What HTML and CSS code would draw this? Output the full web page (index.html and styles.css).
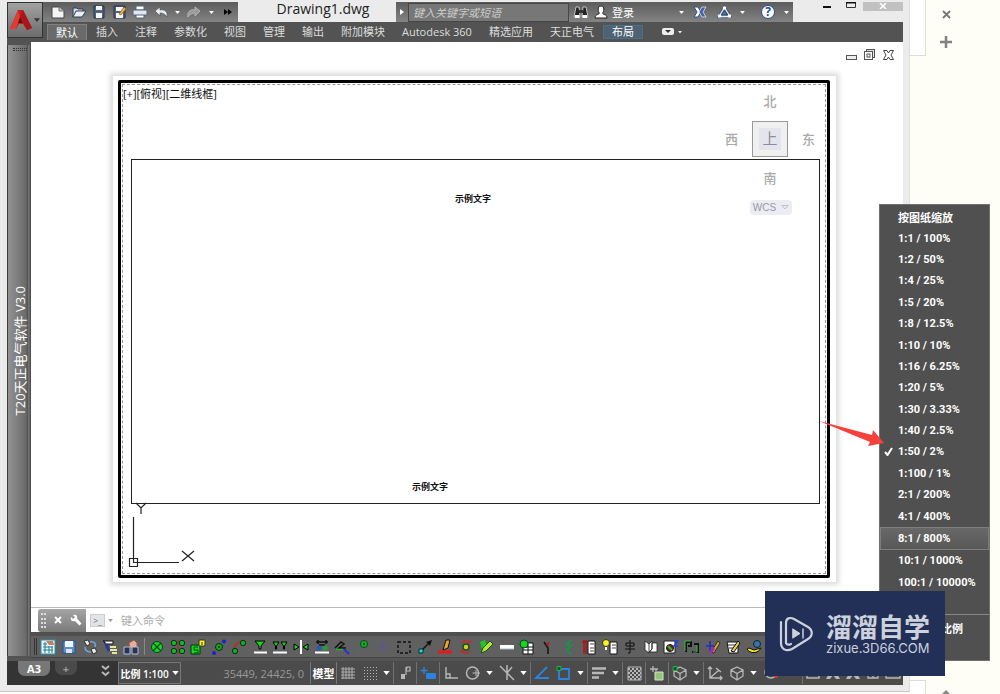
FILE: index.html
```
<!DOCTYPE html>
<html lang="zh-CN">
<head>
<meta charset="utf-8">
<title>Drawing1.dwg</title>
<link rel="stylesheet" href="styles.css">
</head>
<body>
<svg class="defs" width="0" height="0" aria-hidden="true">
  <symbol id="caret" viewBox="0 0 8 5"><path d="M0 0H8L4 5Z" fill="currentColor"/></symbol>
  <symbol id="cube" viewBox="0 0 16 16"><path d="M8 2L14 5V11L8 15L2 11V5ZM2 5L8 8.500L14 5M8 8.500V15" fill="none" stroke="currentColor" stroke-width="1.300"/></symbol>
  <symbol id="glass" viewBox="0 0 16 16"><path d="M3 2H13L9 7V10H7V7Z" fill="#1fd01f" stroke="#000"/><path d="M2 13.500H15" stroke="#fff" stroke-width="2"/></symbol>
</svg>
<div class="page">
  <main class="window">
    <header class="header">
      <button class="app-btn" aria-label="应用程序">
        <svg width="22" height="22" viewBox="0 0 22 22"><path d="M0 20L8 1H13L22 19L17 21L13 15H9L6 20Z" fill="#c3201f"/><path d="M8 1L10 8L6 20L0 20Z" fill="#e23a34"/><path d="M10 8L13 14H8Z" fill="#5a1513"/><path d="M13 1L22 19L17 21L10 8Z" fill="#a81619"/></svg>
        <svg class="c-dark" width="6" height="4"><use href="#caret"/></svg>
      </button>
      <div class="head-main">
        <div class="title-row">
          <div class="quick">
            <button aria-label="新建"><svg viewBox="0 0 16 14"><path d="M2 2H9L14 6V13H2Z" fill="#f4f4f4" stroke="#444"/><path d="M9 2V6H14" fill="#bbb" stroke="#777"/></svg></button>
            <button aria-label="打开"><svg viewBox="0 0 16 14"><path d="M2 12V3H6L7 4H12V6" fill="#cfdbe8" stroke="#2e3f55"/><path d="M2 12L5 6H15L11 12Z" fill="#e9eff5" stroke="#2e3f55"/></svg></button>
            <button aria-label="保存"><svg viewBox="0 0 16 14"><path d="M3 1H13V13H3Z" fill="#52627c" stroke="#27344c"/><path d="M5 1H11V5H5ZM5 8H11V13H5Z" fill="#f3f5f8"/></svg></button>
            <button aria-label="另存为"><svg viewBox="0 0 16 14"><path d="M2 1H13V13H2Z" fill="#52627c" stroke="#27344c"/><path d="M4 2H11V6H4ZM4 8H11V13H4Z" fill="#f3f5f8"/><path d="M7 9L12 2L14 4L9 10Z" fill="#f1b333" stroke="#7a5510" stroke-width=".6"/></svg></button>
            <button aria-label="打印"><svg viewBox="0 0 16 14"><path d="M4 1H12V5H4ZM4 9H12V13H4Z" fill="#fff" stroke="#56657a"/><path d="M1 5H15V10H1Z" fill="#dfe6ee" stroke="#56657a"/></svg></button>
            <button aria-label="放弃"><svg viewBox="0 0 16 14"><path d="M2 6L7 2V5C12 4 15 7 14 12C12 9 10 8 7 8V11Z" fill="#e8edf3" stroke="#555" stroke-width=".7"/></svg></button>
            <svg class="mini" viewBox="0 0 8 5"><use href="#caret"/></svg>
            <button aria-label="重做"><svg viewBox="0 0 16 14"><path d="M14 6L9 2V5C4 4 1 7 2 12C4 9 6 8 9 8V11Z" fill="#999" stroke="#c0c0c0" stroke-width=".8"/></svg></button>
            <svg class="mini" viewBox="0 0 8 5"><use href="#caret"/></svg>
            <button aria-label="更多"><svg viewBox="0 0 16 14"><path d="M4 4L8 7L4 10ZM8 4L12 7L8 10Z" fill="#050505"/></svg></button>
          </div>
          <h1 class="title">Drawing1.dwg</h1>
          <div class="info">
            <button class="expand" aria-label="展开"><svg width="4" height="6"><path d="M0 0L4 3L0 6Z" fill="#fff"/></svg></button>
            <input class="search" type="text" aria-label="搜索" placeholder="键入关键字或短语">
            <button class="ib" aria-label="查找"><svg width="16" height="14" viewBox="0 0 16 14"><path d="M3 2H6L7 12H1ZM10 2H13L15 12H9Z" fill="#222" stroke="#ddd" stroke-width=".8"/><path d="M6 5H10V8H6Z" fill="#333"/><path d="M2 10H6.500V13H2ZM9.500 10H14V13H9.500Z" fill="#fff"/></svg></button>
            <button class="login"><svg width="14" height="14" viewBox="0 0 14 14"><path d="M7 1C11 1 10 7 8.500 8C9 10 13 9 13 13H1C1 9 5 10 5.500 8C4 7 3 1 7 1Z" fill="#fff" stroke="#222"/></svg>登录</button>
            <i class="grow"></i>
            <svg class="mini" viewBox="0 0 8 5"><use href="#caret"/></svg>
            <button class="ib" aria-label="Exchange"><svg width="14" height="14" viewBox="0 0 14 14"><path d="M1 2H5L8 7L5 12H1L4 7Z" fill="#fff" stroke="#324f8e"/><path d="M9 2H13L10 7L13 12H9L6 7Z" fill="#4163ad" stroke="#dfe6f4" stroke-width=".8"/></svg></button>
            <button class="ib" aria-label="A360"><svg width="15" height="14" viewBox="0 0 15 14"><path d="M7.500 3L12.500 11H2.500Z" fill="none" stroke="#34507f" stroke-width="3.500"/><path d="M7.500 2.500L13 11.500H2Z" fill="none" stroke="#e8edf5" stroke-width="1.300"/><circle cx="7.500" cy="3" r="1.800" fill="#fff"/><circle cx="2.500" cy="11" r="1.800" fill="#fff"/><circle cx="12.500" cy="11" r="1.800" fill="#fff"/></svg></button>
            <svg class="mini" viewBox="0 0 8 5"><use href="#caret"/></svg>
            <button class="help" aria-label="帮助">?</button>
            <svg class="mini" viewBox="0 0 8 5"><use href="#caret"/></svg>
          </div>
          <div class="win-btns">
            <button aria-label="最小化"><svg width="8" height="6"><path d="M0 5H8" stroke="#111" stroke-width="2"/></svg></button>
            <button aria-label="最大化"><svg width="10" height="6"><path d="M.5 0V5.500H9.500V0" fill="none" stroke="#333"/><path d="M0 0H10" stroke="#111" stroke-width="3"/></svg></button>
            <button class="close" aria-label="关闭"><svg width="8" height="6" viewBox="0 0 8 6"><path d="M1 0L7 6M7 0L1 6" stroke="#fff" stroke-width="1.500"/></svg></button>
          </div>
        </div>
        <nav class="tabs">
          <button class="tab on">默认</button><button class="tab">插入</button><button class="tab">注释</button><button class="tab">参数化</button><button class="tab">视图</button><button class="tab">管理</button><button class="tab">输出</button><button class="tab">附加模块</button><button class="tab lat">Autodesk 360</button><button class="tab">精选应用</button><button class="tab">天正电气</button><button class="tab ctx">布局</button>
          <button class="tab-more" aria-label="功能区选项"><svg width="22" height="8" viewBox="0 0 22 8"><rect x="0" y="0" width="12" height="7" rx="2" fill="#eee"/><path d="M3 2H9L6 5Z" fill="#333"/><path d="M16 3H20L18 5.500Z" fill="#eee"/></svg></button>
        </nav>
      </div>
    </header>

    <div class="work">
      <aside class="palette"><span class="grip"></span><span class="pal-title">T20天正电气软件 V3.0</span></aside>
      <div class="column">
        <section class="canvas">
          <div class="doc-btns">
            <button aria-label="最小化文档"><svg width="11" height="12"><rect x=".5" y="6.500" width="10" height="4" fill="#eee" stroke="#555"/></svg></button>
            <button aria-label="还原文档"><svg width="12" height="12"><rect x="2.500" y=".5" width="8" height="8" fill="#ddd" stroke="#555"/><rect x=".5" y="2.500" width="8" height="8" fill="#fff" stroke="#555"/><rect x="3" y="5" width="3" height="3" fill="#fff" stroke="#555"/></svg></button>
            <button aria-label="关闭文档"><svg width="11" height="12" viewBox="0 0 11 12"><path d="M.5 1.500H4L5.500 4L7 1.500H10.500L8 6L10.500 10.500H7L5.500 8L4 10.500H.5L3 6Z" fill="#fff" stroke="#444"/></svg></button>
          </div>
          <div class="paper"><div class="sheet">
            <div class="print-area">
              <span class="view-label">[+][俯视][二维线框]</span>
              <div class="viewport"></div>
              <span class="sample s1">示例文字</span>
              <span class="sample s2">示例文字</span>
              <svg class="ucs" width="76" height="70" viewBox="0 0 76 70"><g fill="none" stroke="#222" stroke-width="1.200"><path d="M5.500 16V61.500H51M1.500 57.500h8v8h-8ZM8 2L13 7L18 2M13 7V13M54 50L66 60M66 50L54 60"/></g></svg>
              <div class="viewcube">
                <span class="n">北</span><span class="w">西</span><span class="top"><b>上</b></span><span class="e">东</span><span class="s">南</span>
              </div>
              <button class="wcs">WCS <svg width="8" height="5" viewBox="0 0 8 5"><path d="M.8.5H7.200L4 4Z" fill="none" stroke="#c0c0cc"/></svg></button>
            </div>
          </div></div>
        </section>
        <div class="cmd">
          <div class="cmd-tools"><i class="dots"></i>
            <button aria-label="关闭命令行"><svg width="8" height="8"><path d="M1 1L7 7M7 1L1 7" stroke="#fff" stroke-width="2"/></svg></button>
            <button aria-label="自定义"><svg width="12" height="12" viewBox="0 0 12 12"><path d="M1 3L3 5L5 3L3 1C6 0 8 2 7 4.500L11.500 9.500L9.500 11.500L5 7C2 8 0 6 1 3Z" fill="#fff"/></svg></button>
          </div>
          <span class="prompt">&gt;_</span>
          <svg class="c-gray" width="5" height="3"><use href="#caret"/></svg>
          <input class="cmd-input" type="text" aria-label="命令" placeholder="键入命令">
        </div>
        <div class="toolbar">
          <i class="tgrip"></i>
          <div class="tg first">
            <svg viewBox="0 0 16 16"><rect x="1" y="1" width="14" height="14" fill="#e9f3f5" stroke="#2c93a7"/><path d="M3 5H7M3 8H13M3 11H13M5 3V14M9 7V14M12 7V14" stroke="#267f95"/><path d="M6 2H13L14 6H9Z" fill="#c57d68"/></svg>
            <svg viewBox="0 0 16 16"><path d="M2 2H14V14H2Z" fill="#5b8fd0" stroke="#23528f"/><path d="M4 2H12V8H4Z" fill="#f2f6fb"/><path d="M5 10H11V14H5Z" fill="#dde6f0"/></svg>
            <svg viewBox="0 0 16 16"><path d="M2 2L6 1L8 5L5 7ZM9 10L13 9L15 13L11 15Z" fill="#e8e8e8" stroke="#333"/><path d="M8 3C13 2 14 5 13 8M3 8C3 12 6 13 9 13" fill="none" stroke="#75a4d6" stroke-width="1.500"/></svg>
            <svg viewBox="0 0 16 16"><path d="M1 2H11V5H3V3Z" fill="#fff" stroke="#111"/><path d="M4 5L7 12" stroke="#2636a0" stroke-width="3"/><path d="M8 8H14M8 11H15M10 14H15" stroke="#e5e89a" stroke-width="2"/></svg>
            <svg viewBox="0 0 16 16"><path d="M6 4L11 1L14 4V9H7Z" fill="#e9ada0" stroke="#9e5b50"/><path d="M1 8H7V15H1ZM9 8H15V15H9Z" fill="#273555" stroke="#b3c1d7"/></svg>
          </div>
          <i class="tsep"></i>
          <div class="tg rest">
            <svg viewBox="0 0 16 16"><circle cx="8" cy="8" r="5.500" fill="#15d81c" stroke="#042"/><path d="M4 4L12 12M12 4L4 12" stroke="#042" stroke-width="1.200"/></svg>
            <svg viewBox="0 0 16 16"><g fill="#19b51d" stroke="#032"><circle cx="4" cy="4" r="2.700"/><circle cx="12" cy="4" r="2.700"/><circle cx="4" cy="12" r="2.700"/><circle cx="12" cy="12" r="2.700"/></g><path d="M8 1V15" stroke="#a22"/></svg>
            <svg viewBox="0 0 16 16"><path d="M1 6H10V15H1Z" fill="#17d71d" stroke="#031"/><path d="M9 1H15V7H9Z" fill="#fff31c" stroke="#333"/><path d="M8 8H4V11H8V14H4M12 3V6" fill="none" stroke="#042"/></svg>
            <svg viewBox="0 0 16 16"><circle cx="8" cy="8" r="3.500" fill="#17a51b" stroke="#031"/><circle cx="8" cy="8" r="1" fill="#031"/><circle cx="13" cy="2.500" r="2" fill="#1722d4"/><circle cx="3" cy="14" r="2" fill="#1722d4"/></svg>
            <svg viewBox="0 0 16 16"><path d="M3 11C3 5 7 2 13 4" stroke="#c22" stroke-width="1.500" fill="none"/><circle cx="4" cy="12" r="2.700" fill="#19a91d" stroke="#031"/><circle cx="12" cy="4" r="2.700" fill="#19a91d" stroke="#031"/></svg>
            <svg><use href="#glass"/></svg>
            <svg viewBox="0 0 16 16"><path d="M1 3H7L4.500 7V10H3.500V7ZM9 3H15L12.500 7V10H11.500V7Z" fill="#1fd01f" stroke="#000"/><path d="M1 13.500H15" stroke="#fff" stroke-width="2"/></svg>
            <svg viewBox="0 0 16 16"><path d="M8 1V15" stroke="#fff" stroke-width="2"/><path d="M1 5L6 8L1 11ZM15 5L10 8L15 11Z" fill="#1fd01f" stroke="#000"/></svg>
            <svg viewBox="0 0 16 16"><path d="M2 3H14M4 1V5M12 1V5M5 6H11" stroke="#111" stroke-width="1.500"/><circle cx="5" cy="9" r="2.500" fill="#285bb5"/><circle cx="11" cy="9" r="2.500" fill="#279943"/><path d="M1 13.500H15" stroke="#fff" stroke-width="2"/></svg>
            <svg viewBox="0 0 16 16"><path d="M1 9L7 3L10 5L5 9H12" fill="none" stroke="#111" stroke-width="1.500"/><path d="M2 10.500H9" stroke="#1fb52c" stroke-width="1.500"/><path d="M10 10L15 15" stroke="#2632d4" stroke-width="2"/></svg>
            <svg viewBox="0 0 16 16"><circle cx="9" cy="5" r="3.500" fill="#18b81c" stroke="#042"/><circle cx="9" cy="5" r="1.200" fill="#042"/><path d="M1 14L5 10" stroke="#357b79"/></svg>
            <svg viewBox="0 0 16 16"><path d="M2 8H14M8 2V14" stroke="#57569a"/></svg>
            <svg viewBox="0 0 16 16"><path d="M2 3H14V14H2Z" fill="none" stroke="#111" stroke-width="1.500" stroke-dasharray="3 2"/></svg>
            <svg viewBox="0 0 16 16"><path d="M4 12L11 5" stroke="#111" stroke-width="1.500"/><path d="M9 3L15 1L13 7Z" fill="#111"/><path d="M2 10H6V14H2Z" fill="#22dbe2" stroke="#033"/></svg>
            <svg viewBox="0 0 16 16"><path d="M1 13H15" stroke="#ed1717" stroke-width="3"/><path d="M6 11L9 1H13L11 9Z" fill="#e8a429" stroke="#111"/></svg>
            <svg viewBox="0 0 16 16"><path d="M3 13L6 10M10 5L13 2M4 4C6 1 10 2 12 4M4 12C7 15 10 14 12 12" stroke="#d52020" stroke-width="1.500" fill="none"/><circle cx="8" cy="8" r="3" fill="#e0c91e" stroke="#152" stroke-width="1.500"/></svg>
            <svg viewBox="0 0 16 16"><path d="M2 3L7 1L9 8L4 10Z" fill="#1dcb24"/><path d="M3 14L5 9L12 2L15 5L8 12Z" fill="#b9e528" stroke="#152"/></svg>
            <svg viewBox="0 0 16 16"><path d="M1 8H15" stroke="#fff" stroke-width="4"/><path d="M1 10H15" stroke="#9fbfce"/></svg>
            <svg viewBox="0 0 16 16"><path d="M4 4H14V15H4Z" fill="#fff" stroke="#111"/><path d="M4 8H14M4 11H14M9 5V15" stroke="#111"/><circle cx="5" cy="5" r="4" fill="#17d41c" stroke="#042"/></svg>
            <svg viewBox="0 0 16 16"><path d="M8 15V9L4 3" fill="none" stroke="#111" stroke-width="1.500"/><path d="M6 5L10 2L8 8Z" fill="#b31c1c"/></svg>
            <svg viewBox="0 0 16 16"><path d="M4 3H12M4 8H12M4 13H12" stroke="#24709a"/><path d="M10 1L6 5L10 7L6 11L10 15" fill="none" stroke="#189d2b" stroke-width="1.500"/></svg>
            <svg viewBox="0 0 16 16"><path d="M1 3H6M3 1V15M5 1V15" stroke="#a81919" stroke-width="1.500"/><path d="M7 2H14V15H7Z" fill="#fff" stroke="#111"/><path d="M9 5H13M9 9H13M9 12H13" stroke="#444"/></svg>
            <svg viewBox="0 0 16 16"><path d="M8 3H15V15H8Z" fill="#fff" stroke="#111"/><path d="M10 6H14M10 9H14" stroke="#444"/><circle cx="4" cy="4" r="3.500" fill="#fff12a" stroke="#332"/><path d="M4 8V11" stroke="#fff" stroke-width="2"/></svg>
            <svg viewBox="0 0 16 16"><path d="M4 4H12V7H4ZM8 1V14H6M3 10H13" fill="none" stroke="#111"/></svg>
            <svg viewBox="0 0 16 16"><path d="M2 2L6 5V14L2 11ZM6 5L9 2V10L6 14M9 4H14V13H6L9 10Z" fill="#fff" stroke="#222" stroke-width=".8"/></svg>
            <svg viewBox="0 0 16 16"><path d="M1 2H12V14H1Z" fill="#fff" stroke="#222"/><circle cx="7" cy="9" r="3.500" fill="#7c2424" stroke="#111"/><path d="M5 7L9 11" stroke="#22bd2a" stroke-width="2"/><path d="M11 2H15L11 7H15" fill="none" stroke="#2442dc" stroke-width="1.500"/></svg>
            <svg viewBox="0 0 16 16"><path d="M2 13V3H7V7H4M8 13H14V5H10" fill="none" stroke="#111" stroke-width="2"/><path d="M1 12V2H7M9 13H13V6" fill="none" stroke="#35bb40"/></svg>
            <svg viewBox="0 0 16 16"><path d="M1 7H9M5 2V13" stroke="#2b28c5" stroke-width="1.500"/><path d="M6 13L13 2L15 4L9 14Z" fill="#bfb32b" stroke="#422"/><path d="M5 14L9 9" stroke="#a22ab1" stroke-width="3"/></svg>
            <svg viewBox="0 0 16 16"><path d="M2 3H13V14H4Z" fill="#fff" stroke="#111"/><path d="M3 6H11M4 9H11" stroke="#333"/><path d="M6 12L13 2L15 4L9 13Z" fill="#e7cf52" stroke="#111"/></svg>
            <svg viewBox="0 0 16 16"><path d="M1 10C4 15 12 15 15 9L8 11L3 9Z" fill="#f3df25" stroke="#111"/><circle cx="11" cy="5" r="3.500" fill="#3675a7" stroke="#123"/></svg>
          </div>
        </div>
      </div>
    </div>

    <footer class="status">
      <div class="layouts">
        <button class="lay">A3</button><button class="lay-add">+</button>
        <svg class="chev" width="9" height="12" viewBox="0 0 9 12"><path d="M1 1L4.500 4L8 1M1 7L4.500 10L8 7" fill="none" stroke="#b8b8b8" stroke-width="2"/></svg>
      </div>
      <button class="scale">比例 1:100 <svg width="7" height="4"><use href="#caret"/></svg></button>
      <span class="coords">35449, 24425, 0</span>
      <button class="model">模型</button>
      <div class="seg"><svg class="ic" viewBox="0 0 16 16"><path d="M3 2V14M6 2V14M9 2V14M12 2V14M1 4H15M1 7H15M1 10H15M1 13H15" stroke="currentColor" stroke-width=".9"/></svg><svg class="ic" viewBox="0 0 16 16"><path d="M2 2.500H15M2 5.500H15M2 8.500H15M2 11.500H15M2 14.500H15" stroke="currentColor" stroke-dasharray="1 2"/></svg><svg class="dd"><use href="#caret"/></svg></div>
      <div class="seg"><svg class="ic" viewBox="0 0 16 16"><path d="M10 2H13V6H9ZM9 2V10" stroke="currentColor" fill="none" stroke-width="1.200"/><path d="M4 9H8V14H4Z" fill="currentColor"/></svg></div>
      <div class="seg"><svg class="ic blue" viewBox="0 0 16 16"><path d="M4 2V9M.5 5.500H7.500" stroke="currentColor" stroke-width="1.500"/><rect x="6" y="8" width="10" height="6" rx="1" fill="currentColor"/></svg></div>
      <div class="seg"><svg class="ic" viewBox="0 0 16 16"><path d="M3 2V13H15M3 9H7V13" fill="none" stroke="currentColor" stroke-width="1.400"/></svg><svg class="ic" viewBox="0 0 16 16"><circle cx="7.500" cy="8" r="6" fill="none" stroke="currentColor" stroke-width="1.500"/><path d="M7.500 8H15M11 5V11" stroke="currentColor"/></svg><svg class="dd"><use href="#caret"/></svg><svg class="ic" viewBox="0 0 16 16"><path d="M1 1L15 15M8 0V15M8 8L13 2" stroke="currentColor" stroke-width="1.500"/></svg><svg class="dd"><use href="#caret"/></svg></div>
      <div class="seg"><svg class="ic blue" viewBox="0 0 16 16"><path d="M13 2L2 13H15" fill="none" stroke="currentColor" stroke-width="1.800"/></svg><svg class="ic blue" viewBox="0 0 16 16"><path d="M3 4H13V14H3Z" fill="none" stroke="currentColor" stroke-width="1.800"/><path d="M1 1.500H5V5.500H1Z" fill="#0a5a24" stroke="#24b04a"/></svg><svg class="dd"><use href="#caret"/></svg></div>
      <div class="seg"><svg class="ic" viewBox="0 0 16 16"><path d="M1 3.500H15M1 8H13M1 12.500H8" stroke="currentColor" stroke-width="2.500"/></svg><svg class="dd"><use href="#caret"/></svg></div>
      <div class="seg"><svg class="ic" viewBox="0 0 16 16"><path d="M2 2H15V15H2Z" fill="none" stroke="currentColor"/><path d="M2 4H15M2 8H15M2 12H15M4 6H15M4 10H15M4 14H15" stroke="currentColor" stroke-width="2" stroke-dasharray="2 2"/></svg></div>
      <div class="seg"><svg class="ic" viewBox="0 0 16 16"><path d="M4 1V7M1 4H9M7 6V4" stroke="currentColor" stroke-width="1.300"/><path d="M6 7H14V15H6Z" fill="#93c47a" stroke="#d3e6c7"/></svg></div>
      <div class="seg"><svg class="ic" viewBox="0 0 16 16"><use href="#cube"/><path d="M1 1.500H5V5.500H1Z" fill="#0a5a24" stroke="#24b04a"/></svg><svg class="dd"><use href="#caret"/></svg></div>
      <div class="seg last"><svg class="ic" viewBox="0 0 16 16"><path d="M3 2V13H15M3 13L12 5M9 3L14 7M1 4L3 2L5 4M13 11L15 13L13 15" fill="none" stroke="currentColor" stroke-width="1.400"/></svg><svg class="ic"><use href="#cube"/></svg><svg class="dd"><use href="#caret"/></svg><svg class="ic" viewBox="0 0 16 16"><circle cx="8" cy="7" r="6" fill="none" stroke="currentColor" stroke-width="1.500"/><circle cx="13" cy="11" r="2" fill="#d33"/></svg></div>
      <div class="seg end"><svg class="ic" viewBox="0 0 16 16"><path d="M2 3H14V13H2ZM5 10H11" fill="none" stroke="currentColor" stroke-width="1.500"/></svg><svg class="ic" viewBox="0 0 16 16"><path d="M8 1L15 14H11L8 10L5 14H1Z" fill="currentColor"/></svg><svg class="ic" viewBox="0 0 16 16"><path d="M8 1L15 14H11L8 10L5 14H1Z" fill="currentColor"/></svg><svg class="ic" viewBox="0 0 16 16"><path d="M3 3H13V13H3ZM8 8V13" fill="none" stroke="currentColor" stroke-width="1.300"/></svg><svg class="ic" viewBox="0 0 16 16"><path d="M1 5H15V13H1ZM5 10H12" fill="none" stroke="currentColor" stroke-width="1.300"/></svg></div>
    </footer>
  </main>

  <aside class="side">
    <div class="side-strip"></div>
    <div class="side-btns">
      <button aria-label="关闭"><svg width="9" height="9"><path d="M1 1L8 8M8 1L1 8" stroke="#777" stroke-width="1.800"/></svg></button>
      <button aria-label="添加"><svg width="12" height="12"><path d="M6 0V12M0 6H12" stroke="#808080" stroke-width="2.500"/></svg></button>
    </div>
    <div class="side-foot"><i class="foot-strip"></i><svg class="up" width="8" height="4"><path d="M0 4L4 0L8 4Z" fill="#888"/></svg></div>
  </aside>

  <div class="menu" role="menu">
    <div class="menu-list">
      <button>按图纸缩放</button><button>1:1 / 100%</button><button>1:2 / 50%</button><button>1:4 / 25%</button><button>1:5 / 20%</button><button>1:8 / 12.5%</button><button>1:10 / 10%</button><button>1:16 / 6.25%</button><button>1:20 / 5%</button><button>1:30 / 3.33%</button><button>1:40 / 2.5%</button><button class="checked"><svg width="9" height="9" viewBox="0 0 9 9"><path d="M1 5L3.500 8L8 1" fill="none" stroke="#fff" stroke-width="2"/></svg>1:50 / 2%</button><button>1:100 / 1%</button><button>2:1 / 200%</button><button>4:1 / 400%</button><button class="hover">8:1 / 800%</button><button>10:1 / 1000%</button><button>100:1 / 10000%</button>
    </div>
    <div class="menu-foot"><button>比例</button></div>
  </div>

  <svg class="arrow" width="66" height="30" viewBox="0 0 66 30"><path d="M0 0L53 14L54 9L65 22L49 25L51 21Z" fill="#f5403c"/></svg>

  <div class="mark">
    <svg width="36" height="36" viewBox="0 0 36 36" fill="none" stroke="#ccd1dc" stroke-linejoin="round" stroke-linecap="round"><path d="M8 27V7C8 2 12 1 16 3L30 11C35 14 35 20 30 23L14 33C8 36 3 33 3 27V6" stroke-width="2.200"/><path d="M8 27C9 29 11 29 13 28" stroke-width="2.200"/><path d="M15 13L22 17.500L15 22Z" fill="#ccd1dc" stroke-width="1"/><path d="M25 13V22" stroke-width="1.500"/></svg>
    <div class="mark-text"><strong>溜溜自学</strong><span>zixue.3D66.COM</span></div>
  </div>
</div>
</body>
</html>
```

FILE: styles.css
```
* { box-sizing: border-box; }
body { margin: 0; font-family: "Open Sans", "Noto Sans CJK SC", sans-serif; font-size: 11px; background: #fffef6; }
button { border: 0; padding: 0; margin: 0; background: none; font: inherit; color: inherit; display: flex; align-items: center; justify-content: center; }
input { font: inherit; border: 0; min-width: 0; outline: none; }
svg { display: block; flex: none; }
.defs { position: absolute; }
.page { position: relative; display: flex; height: 100vh; min-height: 690px; overflow: hidden; }
.window { flex: 1; min-width: 0; display: flex; flex-direction: column; padding: 2px 6px 6px 7px; margin-bottom: 2px; background: #ebebeb; border-bottom: 1px solid #c8c8c8; border-right: 1px solid #dedede; }

/* title bar and ribbon tabs */
.header { display: flex; height: 40px; background: #535353; }
.app-btn { width: 36px; height: 36px; gap: 2px; border: 1px solid #333; background: linear-gradient(#a2a2a2, #6c6c6c); }
.c-dark { color: #333; }
.head-main { flex: 1; min-width: 0; display: flex; flex-direction: column; }
.title-row { display: flex; height: 20px; background: #ebebeb; }
.quick { display: flex; align-items: center; width: 195px; padding-left: 5px; background: linear-gradient(#5c5c5c, #838383); }
.quick button { width: 22px; }
.quick button svg { width: 16px; height: 14px; }
.mini { width: 5px; height: 3px; margin: 0 4px; color: #fff; }
.title { flex: 1; margin: 0; text-align: center; font-size: 14px; line-height: 14px; font-weight: 400; color: #222; padding-left: 12px; }
.info { display: flex; align-items: center; width: 397px; background: linear-gradient(#5c5c5c, #838383); }
.expand { width: 12px; height: 20px; }
.search { width: 161px; height: 19px; padding: 0 4px; background: #777; border: 1px solid #454545; font-style: italic; color: #ddd; }
.search::placeholder { color: #ccc; opacity: 1; }
.ib { width: 24px; }
.login { gap: 4px; padding-left: 1px; color: #fff; }
.grow { flex: 1; }
.help { width: 14px; height: 14px; margin: 0 5px 0 12px; border-radius: 50%; background: #fff; color: #264a9b; font-weight: 700; font-size: 12px; line-height: 14px; border: 1px solid #264a9b; }
.win-btns { display: flex; align-items: flex-start; width: 110px; justify-content: flex-end; }
.win-btns button { width: 24px; height: 9px; align-items: flex-start; }
.win-btns .close { width: 40px; padding-top: 1px; background: #c1c1c1; }
.tabs { display: flex; align-items: center; height: 20px; gap: 1px; padding-left: 4px; color: #ddd; }
.tab { height: 16px; padding: 0 8px; line-height: 16px; white-space: nowrap; }
.tab.on { background: #6a6a6a; border: 1px solid #808080; border-bottom: 0; color: #fff; }
.tab.ctx { background: #4d6272; border: 1px solid #45708f; color: #fff; height: 14px; }
.tab-more { margin-left: 18px; }

/* work area */
.work { flex: 1; min-height: 0; display: flex; background: #535353; }
.palette { width: 24px; display: flex; flex-direction: column; align-items: center; justify-content: center; position: relative; margin: 3px 0 2px; background: linear-gradient(90deg, #929292, #6a6a6a 80%, #444 82%, #777 90%, #444); border-left: 1px solid #3c3c3c; }
.grip { position: absolute; top: 3px; width: 14px; height: 3px; border-top: 1px dotted #333; border-bottom: 1px dotted #333; }
.pal-title { writing-mode: vertical-rl; text-orientation: sideways; transform: rotate(180deg); color: #fff; font-size: 13px; line-height: 18px; white-space: nowrap; }
.column { flex: 1; min-width: 0; display: flex; flex-direction: column; }
.canvas { flex: 1; min-height: 0; display: flex; flex-direction: column; background: #fff; border-bottom: 1px solid #bbb; }
.doc-btns { display: flex; justify-content: flex-end; gap: 7px; padding: 7px 9px 0 0; height: 34px; }
.doc-btns button { height: 12px; }
.paper { flex: 1; display: flex; margin: 0 67px 25px 82px; padding: 4px 6px 4px 5px; background: #fff; box-shadow: 0 0 5px 3px #ddd; }
.sheet { flex: 1; display: flex; border: 3px solid #000; border-radius: 2px; padding: 1px; }
.print-area { flex: 1; position: relative; border: 1px dashed #999; color: #111; }
.view-label { position: absolute; left: 0; top: 1px; font-size: 11px; line-height: 16px; }
.viewport { position: absolute; left: 8px; right: 5px; top: 74px; bottom: 69px; border: 1px solid #222; }
.sample { position: absolute; font-size: 9px; line-height: 12px; font-family: "Noto Sans CJK SC", sans-serif; font-weight: 700; }
.s1 { left: 332px; top: 108px; }
.s2 { left: 289px; top: 396px; }
.ucs { position: absolute; left: 5px; bottom: 2px; }
.viewcube { position: absolute; right: -3px; top: -4px; width: 116px; height: 116px; display: grid; grid-template: 1fr 38px 1fr / 1fr 38px 1fr; place-items: center; color: #aaa; font-size: 13px; font-weight: 500; line-height: 16px; }
.n, .s { grid-column: 2; }
.w { grid-area: 2 / 1; }
.e { grid-area: 2 / 3; }
.top { grid-area: 2 / 2; width: 36px; height: 36px; display: grid; place-items: center; border: 1px solid #999; background: #f0f0f1; }
.top b { width: 22px; height: 22px; text-align: center; line-height: 20px; background: #e3e4ec; color: #8c8c9c; font-size: 15px; font-weight: 400; }
.wcs { position: absolute; right: 33px; top: 115px; width: 42px; height: 15px; gap: 5px; border-radius: 4px; background: #ececf5; color: #999; font-size: 10px; font-family: "Liberation Sans", sans-serif; }

/* command line */
.cmd { display: flex; align-items: center; height: 24px; padding-left: 7px; background: #fff; }
.cmd-tools { display: flex; align-items: center; gap: 8px; width: 48px; height: 23px; padding-left: 3px; border-radius: 3px 0 0 3px; background: linear-gradient(#a5a5a5, #7a7a7a); }
.dots { width: 5px; height: 15px; border-left: 2px dotted #ddd; border-right: 2px dotted #ddd; }
.prompt { width: 15px; height: 13px; margin: 0 3px 0 4px; line-height: 11px; text-align: center; background: #e3e3ea; border: 1px solid #ccc; color: #777; font-size: 9px; }
.c-gray { color: #999; }
.cmd-input { flex: 1; padding: 0 8px; background: none; }
.cmd-input::placeholder { color: #aaa; opacity: 1; }

/* tool strip */
.toolbar { display: flex; align-items: center; height: 26px; padding: 0 3px; background: #606060; border-top: 4px solid #505050; border-bottom: 1px solid #444; }
.tgrip { width: 3px; height: 17px; border-left: 1px solid #333; border-right: 1px solid #333; }
.tg { display: flex; justify-content: space-between; }
.tg svg { width: 16px; height: 16px; }
.first { width: 99px; margin-left: 3px; }
.tsep { width: 1px; height: 17px; margin: 0 4px 0 5px; background: #888; }
.rest { flex: 1; max-width: 613px; }

/* status bar */
.status { display: flex; align-items: center; height: 27px; background: #4b4b4b; color: #b8b8b8; border-top: 3px solid #555; }
.layouts { display: flex; align-items: flex-start; width: 111px; height: 24px; padding-left: 11px; background: #343434; }
.lay { width: 32px; height: 15px; border-radius: 0 0 7px 7px; background: #777; color: #fff; font-weight: 700; }
.lay-add { width: 22px; height: 14px; margin-left: 5px; border-radius: 0 0 7px 7px; background: #4a4a4a; color: #999; font-weight: 700; }
.chev { margin: 4px 0 0 24px; }
.scale { width: 63px; height: 22px; gap: 3px; border: 1px solid #777; color: #fff; font-size: 10px; font-weight: 600; white-space: nowrap; }
.coords { width: 129px; padding-right: 6px; text-align: right; color: #999; }
.model { width: 27px; height: 22px; border: solid #777; border-width: 0 1px; color: #fff; font-weight: 600; }
.seg { display: flex; align-items: center; height: 22px; border-right: 1px solid #707070; }
.ic { width: 16px; height: 16px; margin: 0 3px; }
.dd { width: 7px; height: 4px; margin: 0 3px 0 2px; color: #fff; }
.blue { color: #2c83dd; }
.last { flex: 1; }
.end { border: 0; }
.end .ic { margin: 0 2px; }

/* background page strip */
.side { width: 90px; display: flex; flex-wrap: wrap; align-content: space-between; }
.side-strip { width: 16px; height: 56px; background: #fff; border: solid #ddd; border-width: 0 1px 1px 0; }
.side-btns { flex: 1; display: flex; flex-direction: column; gap: 16px; padding: 8px 0 0 14px; }
.side-btns button { width: 12px; height: 12px; }
.side-foot { display: flex; width: 100%; align-items: flex-end; }
.foot-strip { width: 16px; height: 14px; background: #fff; border: solid #ddd; border-width: 1px 1px 0 0; }
.up { margin-left: 16px; }

/* scale menu */
.menu { position: absolute; right: 10px; top: 204px; width: 111px; height: 457px; padding-top: 1px; background: #505050; border: 1px solid #707070; color: #fff; font-weight: 700; font-size: 11px; font-family: Roboto, "Noto Sans CJK SC", sans-serif; }
.menu button { width: 100%; padding-left: 18px; justify-content: flex-start; white-space: nowrap; }
.menu-list { display: flex; flex-direction: column; height: 387px; }
.menu-list button { flex: 1; }
.menu .checked { padding-left: 4px; gap: 5px; }
.menu .hover { background: linear-gradient(#686868, #585858); border: 1px solid #7e7e7e; padding-left: 17px; }
.menu-foot { margin-top: 21px; border-top: 1px solid #888; padding-top: 2px; }
.menu-foot button { height: 22px; justify-content: flex-end; padding-right: 26px; }
.arrow { position: absolute; right: 115px; top: 421px; }

/* watermark */
.mark { position: absolute; right: 55px; top: 591px; width: 180px; height: 85px; display: flex; align-items: center; gap: 12px; padding-left: 13px; background: #223058; color: #ccd1dc; }
.mark-text { display: flex; flex-direction: column; }
.mark strong { font-size: 26px; line-height: 29px; font-weight: 700; }
.mark span { font-family: Inter, sans-serif; font-size: 13px; line-height: 13px; }
```
